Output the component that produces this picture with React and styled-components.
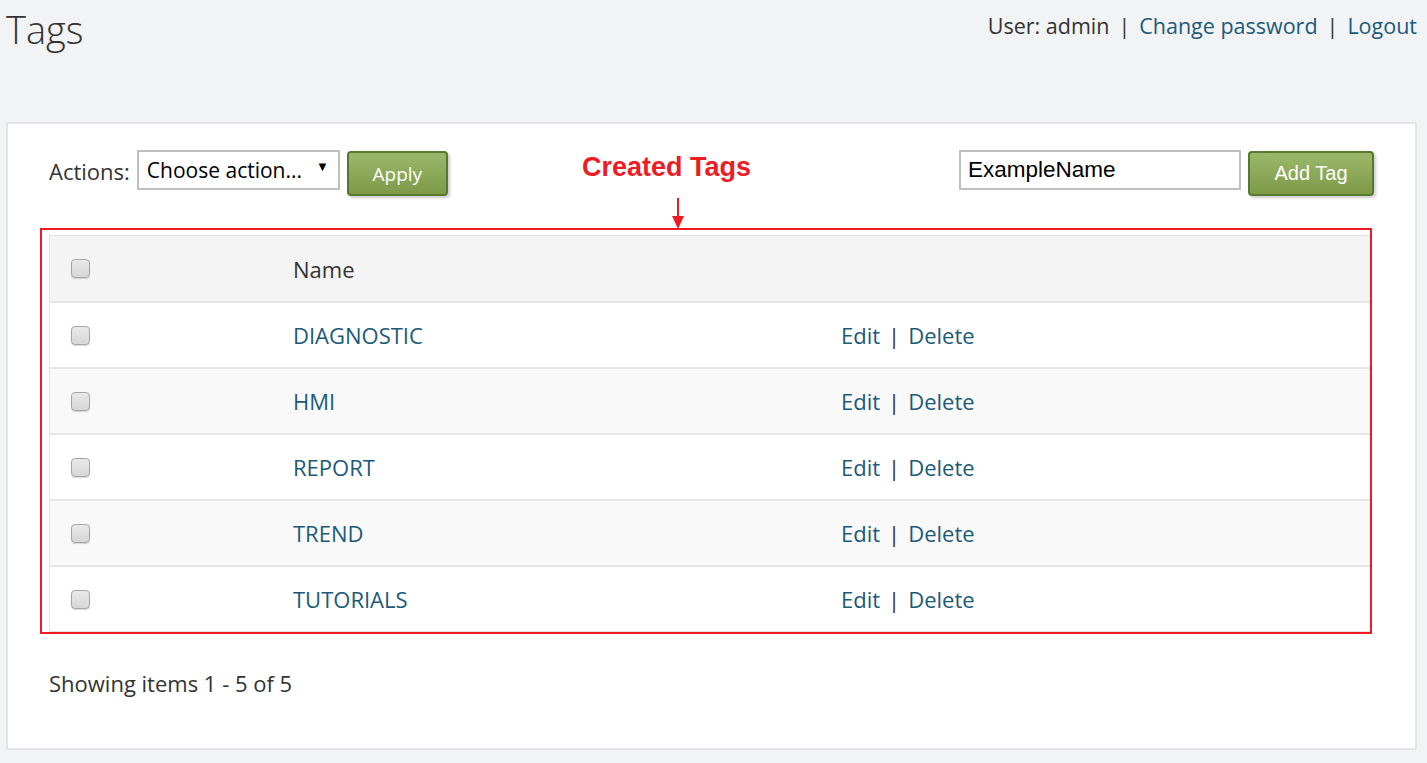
import React from "react";
import styled, { createGlobalStyle } from "styled-components";

const Global = createGlobalStyle`
  html, body { margin: 0; padding: 0; background: #f2f3f5; }
  body { font-family: "Open Sans", "Noto Sans", sans-serif; color: #333; }
  * { box-sizing: border-box; }
`;

const Page = styled.div`
  padding: 0 10px 0 6px;
  min-height: 763px;
`;

const TopBar = styled.header`
  display: flex;
  justify-content: space-between;
  align-items: flex-start;
  height: 122px;
`;

const Title = styled.h1`
  margin: 4px 0 0 0;
  font-weight: 300;
  font-size: 38px;
  line-height: 50px;
  color: #333;
`;

const UserBar = styled.div`
  display: flex;
  align-items: center;
  gap: 9px;
  margin-top: 11px;
  font-size: 21.5px;
  line-height: 30px;
  color: #333;
`;

const Link = styled.a`
  color: #1b5a7a;
  text-decoration: none;
  cursor: pointer;
`;

const Sep = styled.span`
  color: #333;
`;

const Card = styled.main`
  background: #fff;
  border: 2px solid #e3e4e6;
  border-radius: 2px;
  padding: 26px 41px 50px 41px;
`;

const Toolbar = styled.div`
  position: relative;
  display: flex;
  justify-content: space-between;
  align-items: flex-start;
  height: 85px;
`;

const Group = styled.div`
  display: flex;
  align-items: flex-start;
  gap: 7px;
`;

const Label = styled.span`
  font-size: 22px;
  line-height: 42px;
  margin-right: 0px;
`;

const Select = styled.div`
  width: 203px;
  height: 40px;
  border: 2px solid #bfbfbf;
  display: flex;
  align-items: center;
  justify-content: space-between;
  padding: 0 9px 0 8px;
  font-size: 21px;
  color: #000;
  background: #fff;
`;

const Caret = styled.span`
  font-size: 13px;
  margin-top: -8px;
`;

const Button = styled.button`
  height: 45px;
  width: ${(p) => p.$w}px;
  margin-top: 1px;
  border: 2px solid #56792f;
  border-radius: 4px;
  background: linear-gradient(#9cb86c, #7c9a48);
  color: #fff;
  font-family: ${(p) => (p.$arial ? '"Liberation Sans", Arial, sans-serif' : '"Open Sans", sans-serif')};
  font-size: ${(p) => (p.$arial ? 20 : 19)}px;
  box-shadow: 2px 2px 3px rgba(0, 0, 0, 0.2);
  cursor: pointer;
`;

const TextInput = styled.input`
  width: 282px;
  height: 40px;
  border: 2px solid #bfbfbf;
  padding: 0 7px;
  font-family: "Liberation Sans", Arial, sans-serif;
  font-size: 22.5px;
  color: #000;
  outline: none;
`;

const Annotation = styled.div`
  position: absolute;
  left: 50%;
  top: 1px;
  transform: translateX(-50%);
  margin-left: -45px;
  display: flex;
  flex-direction: column;
  align-items: center;
`;

const AnnoText = styled.span`
  font-family: "Liberation Sans", Arial, sans-serif;
  font-weight: 700;
  font-size: 27px;
  color: #ed1c24;
  line-height: 32px;
`;

const TableWrap = styled.div`
  position: relative;
  margin-right: 2px;
`;

const RedBox = styled.div`
  position: absolute;
  left: -9px;
  top: -7px;
  right: 0px;
  bottom: -1px;
  border: 2px solid #ed1c24;
  pointer-events: none;
`;

const ArrowSvg = styled.svg`
  position: absolute;
  left: 622px;
  top: -37px;
`;

const Table = styled.div`
  border: 1px solid #e3e3e3;
  border-bottom-width: 2px;
`;

const Row = styled.div`
  display: grid;
  grid-template-columns: 243px 548px 1fr;
  align-items: center;
  height: ${(p) => (p.$head ? 65 : 66)}px;
  background: ${(p) => (p.$head ? "#f4f4f4" : p.$alt ? "#f9f9f9" : "#fff")};
  border-top: ${(p) => (p.$head ? "none" : "2px solid #e6e6e6")};
  font-size: 22px;
`;

const Cell = styled.div`
  padding-left: ${(p) => p.$pl || 0}px;
  display: flex;
  align-items: center;
  gap: 8px;
`;

const Check = styled.span`
  display: inline-block;
  width: 19px;
  height: 19px;
  border: 1px solid #a5a5a5;
  border-radius: 4px;
  background: linear-gradient(#e9e9e9, #d6d6d6);
  box-shadow: 0 1px 1px rgba(0, 0, 0, 0.15);
`;

const Footer = styled.div`
  margin-top: 35px;
  font-size: 22px;
  line-height: 30px;
`;

const tags = ["DIAGNOSTIC", "HMI", "REPORT", "TREND", "TUTORIALS"];

export default function App() {
  return (
    <Page>
      <Global />
      <TopBar>
        <Title>Tags</Title>
        <UserBar>
          <span>User: admin</span>
          <Sep>|</Sep>
          <Link>Change password</Link>
          <Sep>|</Sep>
          <Link>Logout</Link>
        </UserBar>
      </TopBar>
      <Card>
        <Toolbar>
          <Group>
            <Label>Actions:</Label>
            <Select>
              <span>Choose action...</span>
              <Caret>▼</Caret>
            </Select>
            <Button $w={101}>Apply</Button>
          </Group>
          <Annotation>
            <AnnoText>Created Tags</AnnoText>
          </Annotation>
          <Group>
            <TextInput defaultValue="ExampleName" />
            <Button $w={126} $arial>
              Add Tag
            </Button>
          </Group>
        </Toolbar>
        <TableWrap>
          <ArrowSvg width="14" height="32" viewBox="0 0 14 32">
            <line x1="7" y1="0" x2="7" y2="20" stroke="#ed1c24" strokeWidth="2" />
            <polygon points="1,18 13,18 7,31" fill="#ed1c24" />
          </ArrowSvg>
          <RedBox />
          <Table>
            <Row $head>
              <Cell $pl={21}>
                <Check />
              </Cell>
              <Cell>Name</Cell>
              <Cell />
            </Row>
            {tags.map((t, i) => (
              <Row key={t} $alt={i % 2 === 1}>
                <Cell $pl={21}>
                  <Check />
                </Cell>
                <Cell>
                  <Link>{t}</Link>
                </Cell>
                <Cell>
                  <Link>Edit</Link>
                  <Sep>|</Sep>
                  <Link>Delete</Link>
                </Cell>
              </Row>
            ))}
          </Table>
        </TableWrap>
        <Footer>Showing items 1 - 5 of 5</Footer>
      </Card>
    </Page>
  );
}
